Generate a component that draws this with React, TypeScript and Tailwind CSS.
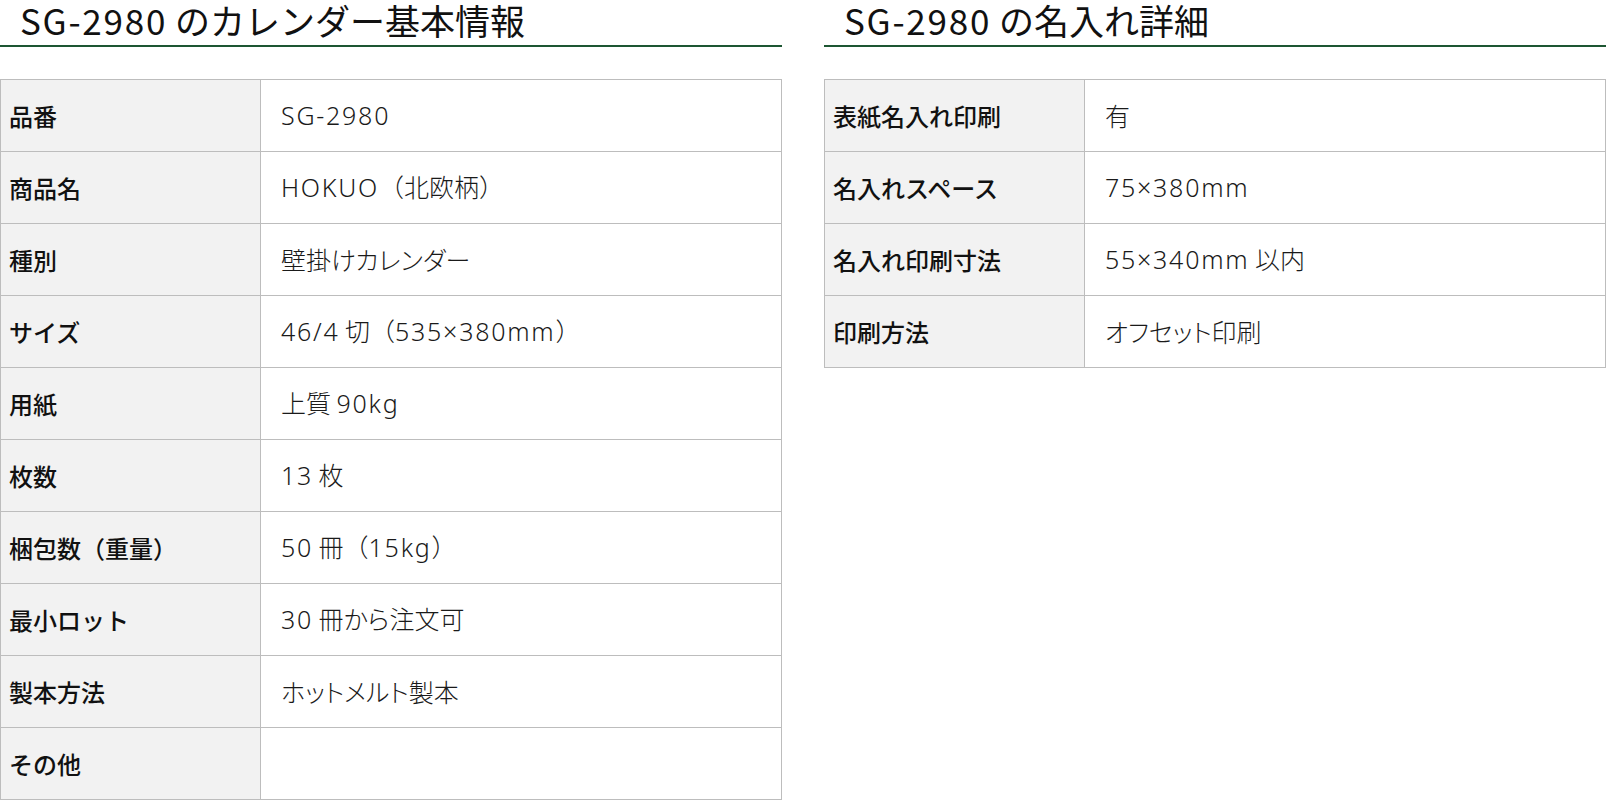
import React from 'react';

type Row = { label: string; value: string };

const BASIC_INFO: Row[] = [
  { label: '品番', value: 'SG-2980' },
  { label: '商品名', value: 'HOKUO（北欧柄）' },
  { label: '種別', value: '壁掛けカレンダー' },
  { label: 'サイズ', value: '46/4 切（535×380mm）' },
  { label: '用紙', value: '上質 90kg' },
  { label: '枚数', value: '13 枚' },
  { label: '梱包数（重量）', value: '50 冊（15kg）' },
  { label: '最小ロット', value: '30 冊から注文可' },
  { label: '製本方法', value: 'ホットメルト製本' },
  { label: 'その他', value: '' },
];

const PRINT_INFO: Row[] = [
  { label: '表紙名入れ印刷', value: '有' },
  { label: '名入れスペース', value: '75×380mm' },
  { label: '名入れ印刷寸法', value: '55×340mm 以内' },
  { label: '印刷方法', value: 'オフセット印刷' },
];

// Split text into latin / kana / other runs so each can be spaced like the original
function Runs({ text, latinClass, kanaClass }: { text: string; latinClass: string; kanaClass: string }) {
  const parts = text.split(/([A-Za-z0-9\-\/×]+|[\u3040-\u30FF]+)/).filter(Boolean);
  return (
    <>
      {parts.map((p, i) => {
        if (/^[A-Za-z0-9\-\/×]+$/.test(p)) return <span key={i} className={latinClass}>{p}</span>;
        if (/^[\u3040-\u30FF]+$/.test(p)) return <span key={i} className={kanaClass}>{p}</span>;
        return <span key={i}>{p}</span>;
      })}
    </>
  );
}

function SpecTable({ title, rows }: { title: string; rows: Row[] }) {
  return (
    <section className="w-[782px] shrink-0">
      {/* Heading with green rule */}
      <div className="h-[47px] border-b-[2px] border-[#1d5632] pl-[20px]">
        <h2 className="text-[35px] font-normal text-[#111] leading-[40px] whitespace-nowrap">
          <Runs text={title} latinClass="tracking-[0.05em]" kanaClass="" />
        </h2>
      </div>

      <table className="mt-[32px] w-full border-collapse">
        <tbody>
          {rows.map((row) => (
            <tr key={row.label} className="h-[72px]">
              <th className="w-[260px] bg-[#f2f2f2] border border-[#bdbdbd] pl-[8px] text-left align-middle text-[24px] font-medium text-[#111]">
                {row.label}
              </th>
              <td className="border border-[#bdbdbd] pl-[20px] align-middle text-[25px] font-light text-[#1a1a1a]">
                <Runs
                  text={row.value}
                  latinClass="tracking-[0.07em] [font-family:'Noto_Sans',sans-serif]"
                  kanaClass="[font-feature-settings:'palt']"
                />
              </td>
            </tr>
          ))}
        </tbody>
      </table>
    </section>
  );
}

export default function App() {
  return (
    <div
      className="w-[1613px] h-[800px] bg-white flex gap-[42px] overflow-hidden"
      style={{ fontFamily: '"Noto Sans CJK JP", "Noto Sans", sans-serif' }}
    >
      <SpecTable title="SG-2980 のカレンダー基本情報" rows={BASIC_INFO} />
      <SpecTable title="SG-2980 の名入れ詳細" rows={PRINT_INFO} />
    </div>
  );
}
